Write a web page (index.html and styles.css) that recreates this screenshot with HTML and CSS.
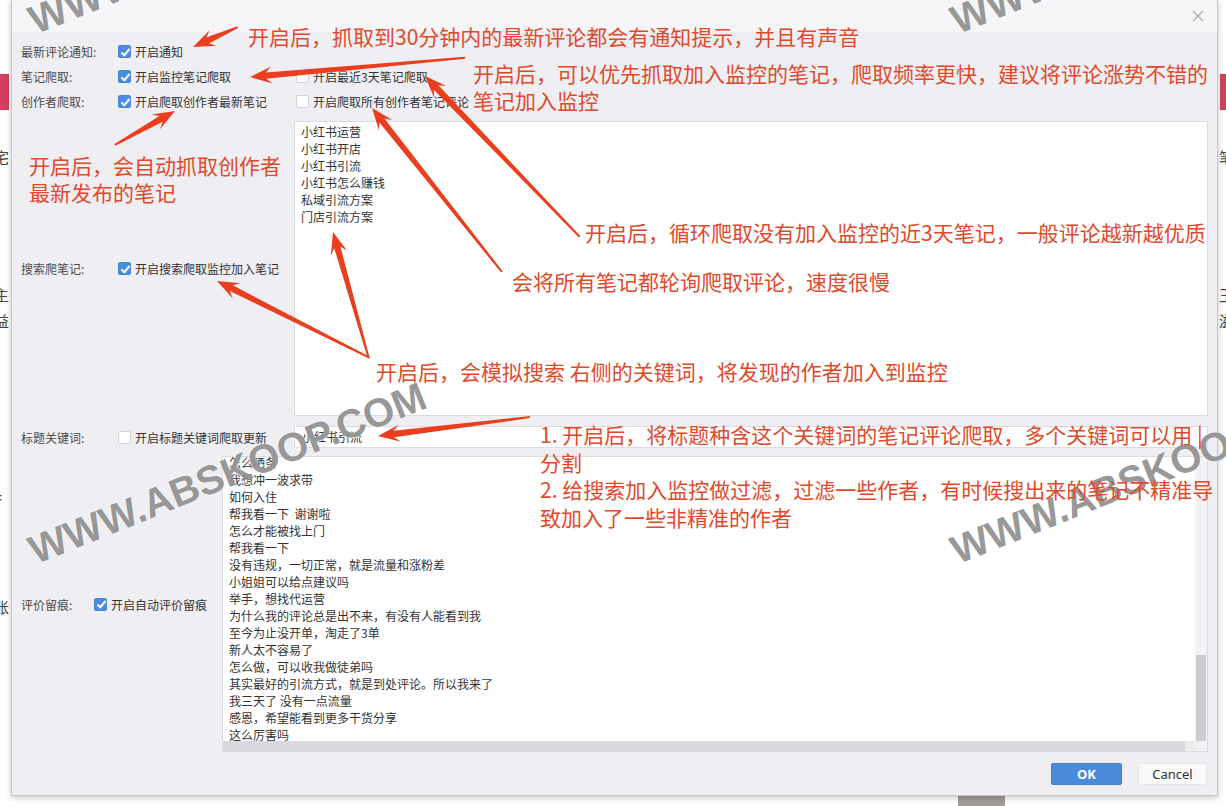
FILE: index.html
```html
<!DOCTYPE html>
<html lang="zh-CN">
<head>
<meta charset="utf-8">
<title>设置</title>
<link rel="stylesheet" href="styles.css">
</head>
<body>
<div class="backdrop">
  <div class="bg-main">
    <div class="strip strip-left">
      <span class="bg-red"></span>
      <span class="bg-ch ch-a">宅</span>
      <span class="bg-ch ch-b">主</span>
      <span class="bg-ch ch-c">益</span>
      <span class="bg-ch ch-d">扌</span>
      <span class="bg-ch ch-e">账</span>
    </div>
    <div class="strip strip-right">
      <span class="bg-red"></span>
      <span class="bg-ch ch-a">笔</span>
      <span class="bg-ch ch-b">王</span>
      <span class="bg-ch ch-c">滋</span>
    </div>
  </div>
  <div class="bg-bottom"><span class="patch"></span></div>
</div>

<div class="dialog">
  <div class="titlebar">
    <svg class="close" width="12" height="12" viewBox="0 0 12 12"><path d="M1 1L11 11M11 1L1 11" stroke="#a9a9ad" stroke-width="1.3" fill="none"/></svg>
  </div>
  <div class="content">
    <div class="row">
      <span class="label">最新评论通知:</span>
      <label class="chk"><span class="box on"></span>开启通知</label>
    </div>
    <div class="row">
      <span class="label">笔记爬取:</span>
      <label class="chk group1"><span class="box on"></span>开启监控笔记爬取</label>
      <label class="chk group2"><span class="box"></span>开启最近3天笔记爬取</label>
    </div>
    <div class="row">
      <span class="label">创作者爬取:</span>
      <label class="chk group1"><span class="box on"></span>开启爬取创作者最新笔记</label>
      <label class="chk group2"><span class="box"></span>开启爬取所有创作者笔记评论</label>
    </div>

    <div class="block search">
      <div class="side side-wide">
        <span class="label">搜索爬笔记:</span>
        <label class="chk"><span class="box on"></span>开启搜索爬取监控加入笔记</label>
      </div>
      <div class="kw-list">
        <div>小红书运营</div>
        <div>小红书开店</div>
        <div>小红书引流</div>
        <div>小红书怎么赚钱</div>
        <div>私域引流方案</div>
        <div>门店引流方案</div>
      </div>
    </div>

    <div class="block keyword">
      <div class="side side-wide">
        <span class="label">标题关键词:</span>
        <label class="chk"><span class="box"></span>开启标题关键词爬取更新</label>
      </div>
      <div class="kw-input">小红书引流</div>
    </div>

    <div class="block review">
      <div class="side side-narrow">
        <span class="label label-short">评价留痕:</span>
        <label class="chk"><span class="box on"></span>开启自动评价留痕</label>
      </div>
      <div class="comments">
        <div class="comments-text">
          <div class="comments-inner">
            <div>怎么晒条</div>
            <div>我想冲一波求带</div>
            <div>如何入住</div>
            <div>帮我看一下&nbsp;&nbsp;谢谢啦</div>
            <div>怎么才能被找上门</div>
            <div>帮我看一下</div>
            <div>没有违规，一切正常，就是流量和涨粉差</div>
            <div>小姐姐可以给点建议吗</div>
            <div>举手，想找代运营</div>
            <div>为什么我的评论总是出不来，有没有人能看到我</div>
            <div>至今为止没开单，淘走了3单</div>
            <div>新人太不容易了</div>
            <div>怎么做，可以收我做徒弟吗</div>
            <div>其实最好的引流方式，就是到处评论。所以我来了</div>
            <div>我三天了 没有一点流量</div>
            <div>感恩，希望能看到更多干货分享</div>
            <div>这么厉害吗</div>
          </div>
        </div>
        <div class="vscroll"><span class="vthumb"></span></div>
        <div class="hscroll"><span class="hthumb"></span></div>
        <div class="corner"></div>
      </div>
    </div>
  </div>
  <div class="footer">
    <button class="btn btn-ok">OK</button>
    <button class="btn btn-cancel">Cancel</button>
  </div>
</div>

<div class="overlay">
  <div class="wm wm1">WWW.ABSKOOP.COM</div>
  <div class="wm wm2">WWW.ABSKOOP.COM</div>
  <div class="wm wm3">WWW.ABSKOOP.COM</div>
  <div class="wm wm4">WWW.ABSKOOP.COM</div>

  <svg class="arrows" width="1226" height="806" viewBox="0 0 1226 806">
    <g fill="#ea3e1e">
      <polygon transform="translate(193 47) rotate(156)" points="-49,-1 -16,-3.2 -22,-8.5 0,0 -22,8.5 -16,3.2 -49,1"/>
      <polygon transform="translate(250 77) rotate(174.9)" points="-216,-1 -16,-3.2 -22,-8.5 0,0 -22,8.5 -16,3.2 -216,1"/>
      <polygon transform="translate(175 111) rotate(-29.5)" points="-69,-1 -16,-3.2 -22,-8.5 0,0 -22,8.5 -16,3.2 -69,1"/>
      <polygon transform="translate(425 76) rotate(-133.9)" points="-223,-1 -16,-3.2 -22,-8.5 0,0 -22,8.5 -16,3.2 -223,1"/>
      <polygon transform="translate(372 108) rotate(-128.4)" points="-209,-1 -16,-3.2 -22,-8.5 0,0 -22,8.5 -16,3.2 -209,1"/>
      <polygon transform="translate(333 232) rotate(-105.8)" points="-129,-1 -16,-3.2 -22,-8.5 0,0 -22,8.5 -16,3.2 -129,1"/>
      <polygon transform="translate(217 281) rotate(-153.3)" points="-171,-1 -16,-3.2 -22,-8.5 0,0 -22,8.5 -16,3.2 -171,1"/>
      <polygon transform="translate(378 436) rotate(172.9)" points="-153,-1 -16,-3.2 -22,-8.5 0,0 -22,8.5 -16,3.2 -153,1"/>
    </g>
  </svg>

  <div class="note n1">开启后，抓取到30分钟内的最新评论都会有通知提示，并且有声音</div>
  <div class="note n2">开启后，可以优先抓取加入监控的笔记，爬取频率更快，建议将评论涨势不错的<br>笔记加入监控</div>
  <div class="note n3">开启后，会自动抓取创作者<br>最新发布的笔记</div>
  <div class="note n4">开启后，循环爬取没有加入监控的近3天笔记，一般评论越新越优质</div>
  <div class="note n5">会将所有笔记都轮询爬取评论，速度很慢</div>
  <div class="note n6">开启后，会模拟搜索 右侧的关键词，将发现的作者加入到监控</div>
  <div class="note n7">1. 开启后，将标题种含这个关键词的笔记评论爬取，多个关键词可以用 |<br>分割<br>2. 给搜索加入监控做过滤，过滤一些作者，有时候搜出来的笔记不精准导<br>致加入了一些非精准的作者</div>
</div>
</body>
</html>
```

FILE: styles.css
```css
* { box-sizing: border-box; }

html, body {
  margin: 0;
  padding: 0;
}

body {
  width: 1226px;
  height: 806px;
  overflow: hidden;
  position: relative;
  background: #ffffff;
  font-family: "Noto Sans CJK SC", "Noto Sans", sans-serif;
  color: #333;
}

/* ---------- background page (under the dialog) ---------- */
.backdrop {
  display: flex;
  flex-direction: column;
  height: 806px;
}

.bg-main {
  height: 795px;
  display: flex;
  justify-content: space-between;
}

.strip {
  width: 12px;
  display: flex;
  flex-direction: column;
  overflow: hidden;
  font-size: 15px;
  line-height: 18px;
  color: #444;
}

.strip-right {
  align-items: flex-end;
  width: 9px;
}

.bg-red {
  display: block;
  width: 9px;
  height: 36px;
  margin-top: 74px;
  background: #d4405c;
}

.strip-right .bg-red {
  width: 6px;
}

.bg-ch { display: block; white-space: nowrap; }
.strip-left .bg-ch { margin-left: -6px; }
.strip-right .bg-ch { margin-right: -8px; }
.ch-a { margin-top: 38px; }
.ch-b { margin-top: 120px; }
.ch-c { margin-top: 8px; }
.ch-d { margin-top: 160px; }
.ch-e { margin-top: 90px; }

.bg-bottom {
  height: 11px;
  padding-left: 958px;
}

.patch {
  display: block;
  width: 47px;
  height: 11px;
  background: #a39d96;
}

/* ---------- dialog ---------- */
.dialog {
  position: absolute;
  left: 11px;
  top: -1px;
  width: 1207px;
  background: #efeff3;
  border: 1px solid #c6c6ca;
  box-shadow: 0 2px 6px rgba(0, 0, 0, 0.22);
}

.titlebar {
  height: 32px;
  background: #f6f6f8;
  display: flex;
  justify-content: flex-end;
  align-items: center;
  padding-right: 13px;
}

.close { display: block; }

.content {
  padding: 7px 9px 0 9px;
  font-size: 12px;
}

.row {
  display: flex;
  align-items: center;
  height: 25px;
}

.label {
  width: 97px;
  flex: none;
  color: #4a4a4a;
  white-space: nowrap;
}

.label-short { width: 73px; }

.chk {
  display: flex;
  align-items: center;
  gap: 4px;
  color: #333;
  white-space: nowrap;
}

.group1 { width: 176px; flex: none; }
.group2 { margin-left: 2px; }

.box {
  width: 13px;
  height: 13px;
  flex: none;
  position: relative;
  border-radius: 2px;
  background: #ffffff;
  border: 1px solid #d2d2d7;
}

.box.on {
  background: #4b8ddc;
  border-color: #4686d6;
}

.box.on::after {
  content: "";
  position: absolute;
  left: 3.5px;
  top: 0.5px;
  width: 3px;
  height: 7px;
  border: solid #ffffff;
  border-width: 0 2px 2px 0;
  transform: rotate(40deg);
}

.block {
  display: flex;
  align-items: center;
}

.side {
  display: flex;
  align-items: center;
  flex: none;
}

.side-wide { width: 273px; }
.side-narrow { width: 201px; }

.search { margin-top: 7px; }

.kw-list {
  flex: 1;
  height: 295px;
  background: #ffffff;
  border: 1px solid #dcdce0;
  padding: 1px 6px;
  line-height: 17px;
  color: #333;
}

.keyword { margin-top: 10px; }

.kw-input {
  flex: 1;
  height: 22px;
  background: #ffffff;
  border: 1px solid #dcdce0;
  padding-left: 7px;
  line-height: 20px;
  color: #333;
}

.review { margin-top: 8px; }

.comments {
  flex: 1;
  height: 296px;
  background: #ffffff;
  border: 1px solid #dcdce0;
  display: grid;
  grid-template-columns: 1fr 12px;
  grid-template-rows: 1fr 10px;
}

.comments-text {
  overflow: hidden;
  padding-left: 6px;
  line-height: 17px;
  color: #333;
}

.comments-inner { margin-top: -3px; }

.vscroll {
  background: #f3f3f5;
  display: flex;
  flex-direction: column;
  justify-content: flex-end;
  padding: 0 1px;
}

.vthumb {
  display: block;
  height: 86px;
  background: #cdcdd1;
}

.hscroll {
  background: #ececef;
  padding-right: 10px;
}

.hthumb {
  display: block;
  height: 100%;
  background: #d9d9dd;
}

.corner { background: #f1f1f3; }

.footer {
  display: flex;
  justify-content: flex-end;
  gap: 16px;
  padding: 11px 10px 10px 0;
}

.btn {
  height: 22px;
  margin: 0;
  padding: 0;
  border-radius: 2px;
  font-family: "Noto Sans", "Liberation Sans", sans-serif;
  font-size: 13px;
  line-height: 20px;
}

.btn-ok {
  width: 71px;
  background: #4a8cdb;
  border: 1px solid #3f80d0;
  color: #ffffff;
  font-weight: bold;
}

.btn-cancel {
  width: 69px;
  background: #f9f9fa;
  border: 1px solid #e7e7ea;
  color: #333;
}

/* ---------- annotation overlay ---------- */
.overlay {
  position: absolute;
  left: 0;
  top: 0;
  width: 1226px;
  height: 806px;
  overflow: hidden;
  pointer-events: none;
}

.arrows {
  position: absolute;
  left: 0;
  top: 0;
}

.note {
  position: absolute;
  white-space: nowrap;
  color: #e1492b;
  font-family: "Noto Sans CJK SC", sans-serif;
  font-size: 21px;
  line-height: 27px;
}

.n1 { left: 248px; top: 23px; }
.n2 { left: 473px; top: 60px; }
.n3 { left: 29px; top: 152px; }
.n4 { left: 585px; top: 219px; }
.n5 { left: 512px; top: 268px; }
.n6 { left: 376px; top: 358px; }
.n7 { left: 540px; top: 421px; line-height: 27.5px; }

.wm {
  position: absolute;
  white-space: nowrap;
  font-family: "Liberation Sans", Arial, sans-serif;
  font-weight: bold;
  font-size: 40px;
  line-height: 40px;
  color: rgba(118, 118, 118, 0.75);
  text-shadow: 0 0 2px rgba(255, 255, 255, 0.9);
  transform-origin: 0 100%;
  transform: rotate(-21.8deg);
}

.wm1 { left: 38px; top: 530px; }
.wm2 { left: 960px; top: 530px; }
.wm3 { left: 38px; top: 0px; }
.wm4 { left: 960px; top: 0px; }
```
